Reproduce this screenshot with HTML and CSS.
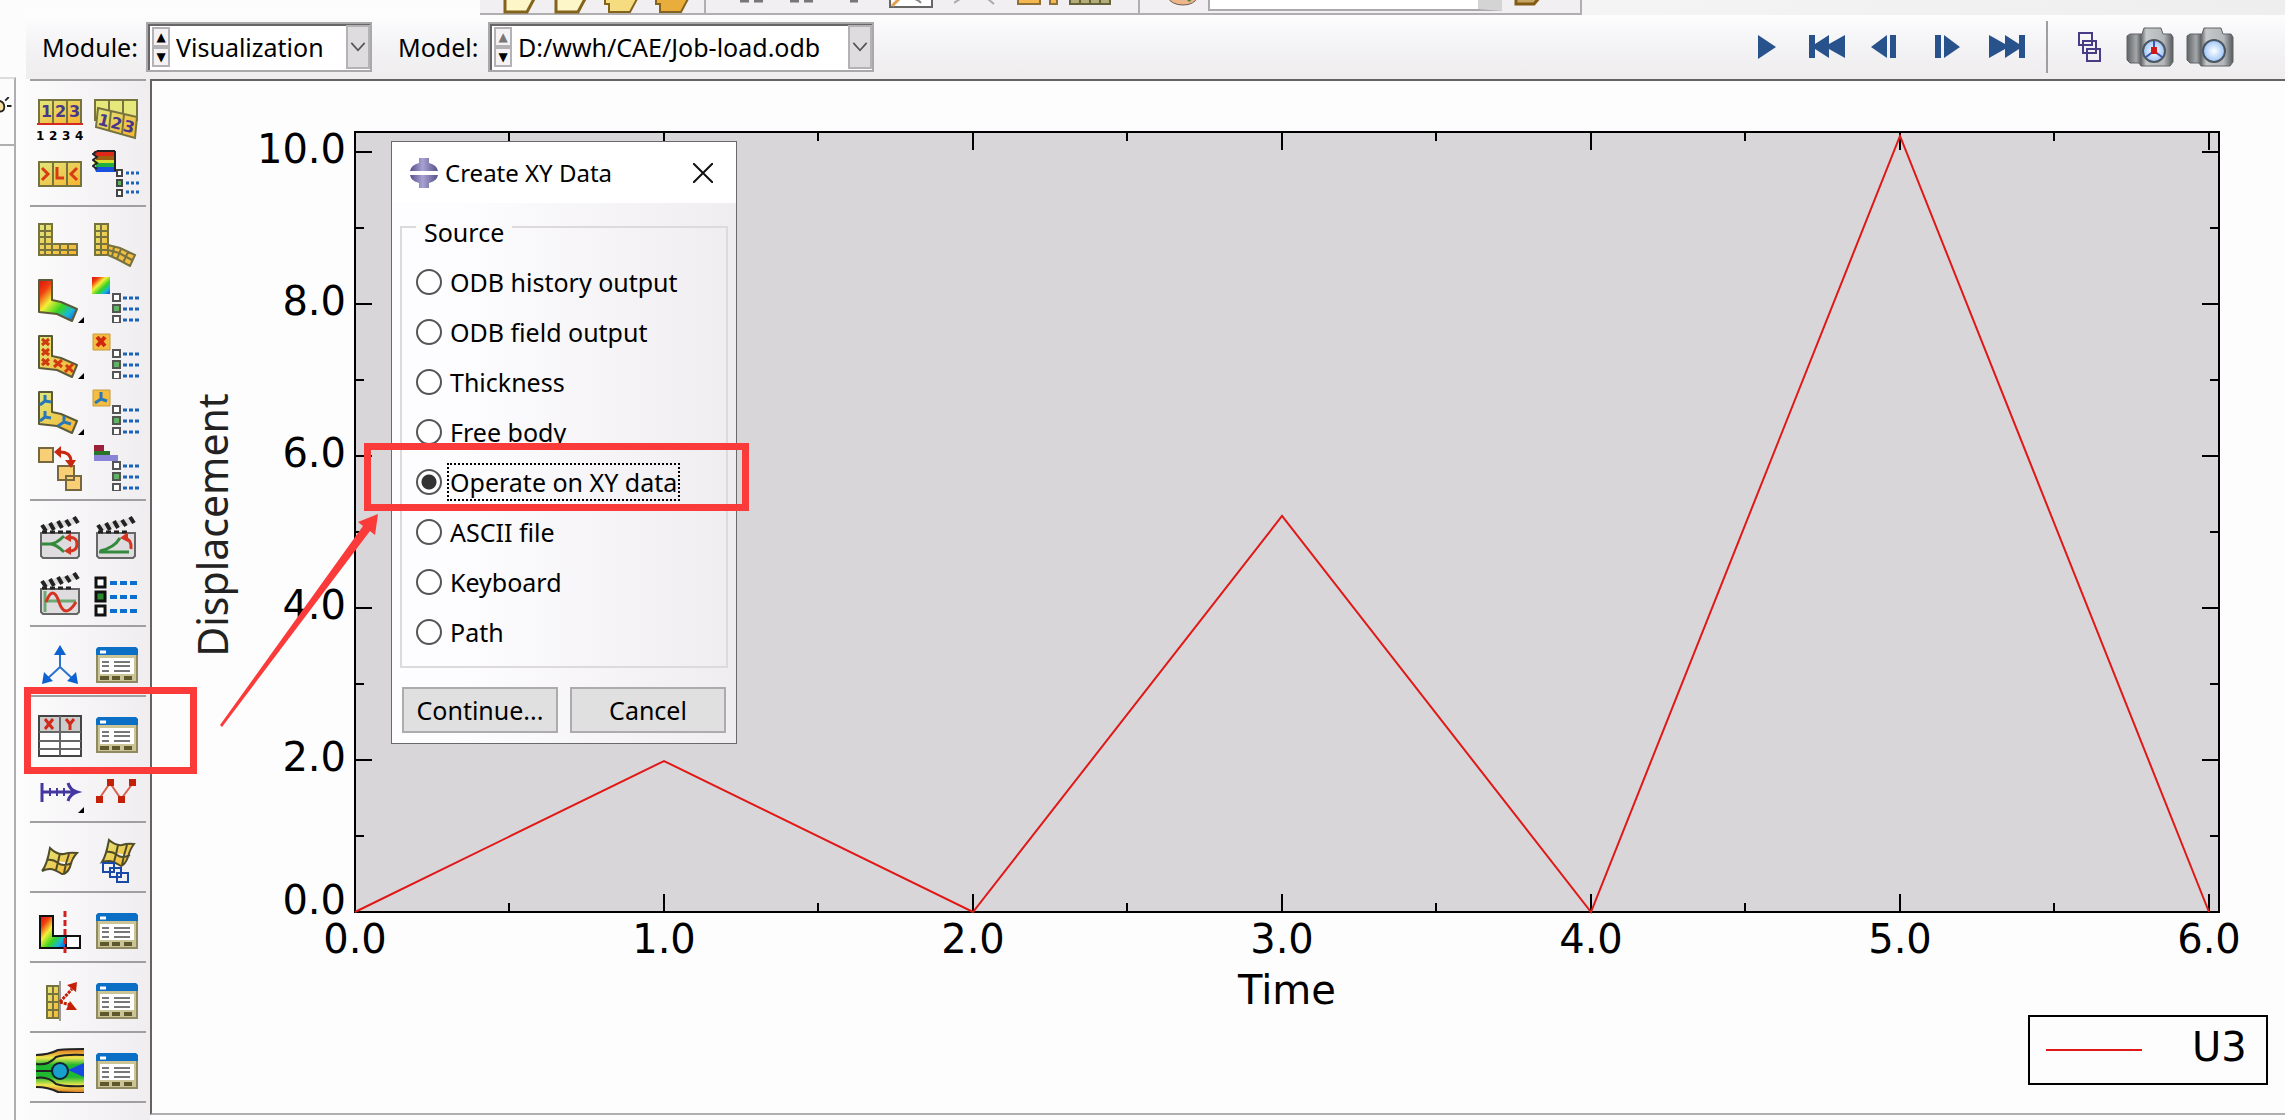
FILE: index.html
```html
<!DOCTYPE html>
<html lang="en">
<head>
    <meta charset="UTF-8">
    <meta name="viewport" content="width=device-width, initial-scale=1.0">
    <title>Visualization - Job-load.odb</title>
    <link rel="stylesheet" href="styles.css">
</head>
<body>

    <!-- shared icon parts -->
    <svg class="defs" width="0" height="0" aria-hidden="true">
        <defs>
            <linearGradient id="gold" x1="0" y1="0" x2="1" y2="1">
                <stop offset="0" stop-color="#dfe87c"/><stop offset="1" stop-color="#f9b32e"/>
            </linearGradient>
            <linearGradient id="rainbow" x1="0" y1="0" x2="1" y2="1">
                <stop offset="0" stop-color="#d81010"/><stop offset=".2" stop-color="#f04010"/><stop offset=".4" stop-color="#f4f03a"/>
                <stop offset=".62" stop-color="#38d420"/><stop offset=".8" stop-color="#18b8d8"/><stop offset="1" stop-color="#1848e8"/>
            </linearGradient>
            <linearGradient id="flow" x1="0" y1="0" x2="0" y2="1">
                <stop offset="0" stop-color="#e07020"/><stop offset=".2" stop-color="#f0e850"/><stop offset=".36" stop-color="#20b830"/>
                <stop offset=".64" stop-color="#20b830"/><stop offset=".82" stop-color="#f0e850"/><stop offset="1" stop-color="#e07020"/>
            </linearGradient>
            <linearGradient id="metal" x1="0" y1="0" x2="1" y2="0">
                <stop offset="0" stop-color="#5f6366"/><stop offset=".2" stop-color="#a4a8aa"/><stop offset=".3" stop-color="#5f6366"/>
                <stop offset=".42" stop-color="#c6c9ca"/><stop offset=".8" stop-color="#b4b7b9"/><stop offset="1" stop-color="#55595c"/>
            </linearGradient>
            <radialGradient id="lens">
                <stop offset="0" stop-color="#ffffff"/><stop offset="1" stop-color="#9cc4f8"/>
            </radialGradient>
            <linearGradient id="violet" x1="0" y1="0" x2="1" y2="0">
                <stop offset="0" stop-color="#56528a"/><stop offset=".45" stop-color="#a7a2d2"/><stop offset="1" stop-color="#56528a"/>
            </linearGradient>
            <symbol id="options" viewBox="0 0 48 48">
                <g stroke="#555" stroke-width="2"><path fill="#fff" d="M21 19h7v7h-7zM21 41h7v7h-7z"/><path fill="#5fb45f" d="M21 30h7v7h-7z"/></g>
                <path stroke="#1c62b8" stroke-width="3" stroke-dasharray="4 2" d="M31 23h16M31 34h16M31 45h16"/>
            </symbol>
            <symbol id="manager" viewBox="0 0 48 48">
                <path fill="#cbc596" stroke="#8f8a62" stroke-width="2" d="M5 12h40v31H5z"/>
                <path fill="#0c6fc6" d="M4 16v-6l2-2h38l2 2v6z"/>
                <path stroke="#fff" stroke-width="3" d="M8 13h6"/>
                <path fill="#fff" d="M8 19h34v16H8z"/>
                <path stroke="#777" stroke-width="2" d="M10 23h7M22 23h16M10 27h7M22 27h16M10 32h7M22 32h16"/>
                <path stroke="#5d582e" stroke-width="4" d="M8 39h9M20 39h8M32 39h8"/>
            </symbol>
            <symbol id="clapper" viewBox="0 0 48 48">
                <path fill="#dedcde" stroke="#666" stroke-width="2" d="M5 20h38v23l-2 2H7l-2-2z"/>
                <path fill="#ddd" d="M4 13 42 4v6L8 18z"/>
                <path stroke="#222" stroke-width="4" d="M6 12l4 6M14 10l4 7M22 8l4 7M30 7l4 6M38 4l4 6"/>
                <path stroke="#222" stroke-width="3" stroke-dasharray="5 3" d="M6 19h30"/>
            </symbol>
            <symbol id="ell" viewBox="0 0 48 48">
                <path stroke="#5d5a3a" stroke-width="2" stroke-linejoin="round" d="M3 5h13v20l9 2 16 7-5 12-15-7-18-2z"/>
            </symbol>
            <symbol id="more" viewBox="0 0 48 48"><path d="M48 42v6h-6z"/></symbol>
            <symbol id="camera" viewBox="0 0 48 40">
                <path fill="url(#metal)" stroke="#606466" d="M1 9l3-2h12l2-6h17l2 6h8l2 3v25l-3 4H15l-2-3H4l-3-3z"/>
                <circle cx="28" cy="24" r="11" fill="url(#lens)" stroke="#4b5660" stroke-width="2"/>
            </symbol>
            <symbol id="folder" viewBox="0 0 36 14"><path fill="#fdf6c8" stroke="#84641c" stroke-width="3" d="M3-3v15h22l8-15"/></symbol>
        </defs>
    </svg>

    <header class="strip">
        <div class="strip-group files">
            <svg width="36" height="14"><use href="#folder"/></svg>
            <svg width="36" height="14"><use href="#folder"/></svg>
            <svg width="36" height="14" viewBox="0 0 36 14"><path fill="#f5dc80" stroke="#84641c" stroke-width="2" d="M1-3v7h4v8h21l8-15"/></svg>
            <svg width="36" height="14" viewBox="0 0 36 14"><path fill="#e9ad3c" stroke="#84641c" stroke-width="2" d="M1-3v7h4v8h21l8-15"/></svg>
        </div>
        <div class="strip-group views">
            <svg width="120" height="14" viewBox="0 0 120 14"><path stroke="#777" stroke-width="3" d="M0 1h9M14 1h9M50 1h9M64 1h9M110 1h8"/></svg>
            <svg width="52" height="14" viewBox="0 0 52 14"><path fill="#fff" stroke="#666" stroke-width="2" d="M9-2v9h42v-9"/><path stroke="#e2a050" stroke-width="3" d="M11 6l8-8"/><path stroke="#888" stroke-width="2" fill="none" d="M26-2q10 0 14 5"/></svg>
            <svg width="42" height="14" viewBox="0 0 42 14"><path stroke="#aaa" stroke-width="2" d="M0 3l6-4M34-1l6 5"/></svg>
            <svg width="96" height="14" viewBox="0 0 96 14"><path fill="#f5b850" stroke="#8f7138" stroke-width="2" d="M1-2h22v6H1zM33-2h7v6h-7z"/><path fill="#b3ad78" stroke="#66633c" stroke-width="2" d="M53-2h40v6H53z"/><path stroke="#66633c" stroke-width="2" d="M63 0v4M73 0v4M83 0v4"/></svg>
        </div>
        <div class="strip-group picker">
            <svg width="32" height="14" viewBox="0 0 32 14"><path fill="#eeb48a" stroke="#6d5c4c" d="M1-3q5 8 16 8t15-8"/><path fill="#478a40" d="M20-1h7l-4 3z"/></svg>
            <select class="strip-select" aria-label="Color codes"><option></option></select>
            <svg width="36" height="14" viewBox="0 0 36 14"><path fill="#c8a465" stroke="#845b14" stroke-width="3" d="M4-3v7h18l6-7"/></svg>
        </div>
    </header>

    <aside class="tree">
        <svg class="bulb" width="12" height="20" viewBox="0 0 12 20"><path fill="#f4e0a0" stroke="#222" stroke-width="2" d="M-4 4q7 1 7 7t-7 5M4 4l4-4M6 10h5"/></svg>
    </aside>

    <div class="context">
        <label for="module">Module:</label>
        <div class="combo module">
            <div class="spin"><button aria-label="Previous module">&#9650;</button><button aria-label="Next module">&#9660;</button></div>
            <select id="module"><option>Visualization</option></select>
            <svg class="arrow" width="24" height="44" viewBox="0 0 24 44"><path d="M4 17l8 9 8-9"/></svg>
        </div>
        <label for="model">Model:</label>
        <div class="combo model">
            <div class="spin"><button aria-label="Previous model" disabled>&#9650;</button><button aria-label="Next model">&#9660;</button></div>
            <select id="model"><option>D:/wwh/CAE/Job-load.odb</option></select>
            <svg class="arrow" width="24" height="44" viewBox="0 0 24 44"><path d="M4 17l8 9 8-9"/></svg>
        </div>
        <div class="player">
            <button aria-label="Play"><svg width="36" height="24" viewBox="0 0 36 24"><path d="M9 0v24l18-12z"/></svg></button>
            <button aria-label="First"><svg width="36" height="24" viewBox="0 0 36 24"><path d="M0 0h6v9L20 0v9L36 0v23L20 14v9L6 14v9H0z"/></svg></button>
            <button aria-label="Previous"><svg width="36" height="24" viewBox="0 0 36 24"><path d="M18 0v23L2 12zM21 0h6v23h-6z"/></svg></button>
            <button aria-label="Next"><svg width="36" height="24" viewBox="0 0 36 24"><path d="M6 0h6v23H6zM15 0v23l16-11z"/></svg></button>
            <button aria-label="Last"><svg width="36" height="24" viewBox="0 0 36 24"><path d="M36 0h-6v9L16 0v9L0 0v23l16-9v9l14-9v9h6z"/></svg></button>
        </div>
        <div class="capture">
            <button aria-label="Viewports"><svg width="24" height="32" viewBox="0 0 24 32"><path fill="none" stroke="#483c86" stroke-width="2" d="M1 2h13v12H1zM5 10h13v12H5zM9 18h13v12H9z"/></svg></button>
            <button aria-label="Capture with triad"><svg width="48" height="40" viewBox="0 0 48 40"><use href="#camera"/><path stroke="#3c55b4" stroke-width="2" d="M28 24V14M28 24l-8 6M28 24l8 6"/><path fill="#d01818" d="M25 20h6v7h-6z"/></svg></button>
            <button aria-label="Capture"><svg width="48" height="40" viewBox="0 0 48 40"><use href="#camera"/></svg></button>
        </div>
    </div>

    <nav class="toolbox">
        <div class="group">
            <button aria-label="Plot undeformed labels"><svg viewBox="0 0 48 48"><path fill="url(#gold)" stroke="#77733f" stroke-width="2" d="M3 7h42v24H3zM17 7v24M31 7v24"/><path stroke="#d42a20" stroke-width="2" d="M1 31h46"/><text class="num" x="5" y="24">1</text><text class="num" x="19" y="24">2</text><text class="num" x="33" y="24">3</text><text class="tiny" x="0" y="47">1</text><text class="tiny" x="13" y="47">2</text><text class="tiny" x="26" y="47">3</text><text class="tiny" x="39" y="47">4</text></svg></button>
            <button aria-label="Plot deformed labels"><svg viewBox="0 0 48 48"><path fill="#e6e87c" stroke="#77733f" stroke-width="2" d="M3 7h42v20H3zM17 7v20M31 7v20"/><path fill="url(#gold)" stroke="#77733f" stroke-width="2" d="M6 15l39 9-2 21-39-11zM19 18l-2 19M32 21l-2 20"/><g transform="rotate(14 24 30)"><text class="num" x="6" y="36">1</text><text class="num" x="19" y="36">2</text><text class="num" x="32" y="36">3</text></g></svg></button>
            <button aria-label="Symbols on strip"><svg viewBox="0 0 48 48"><path fill="url(#gold)" stroke="#77733f" stroke-width="2" d="M3 13h42v24H3zM17 13v24M31 13v24"/><path fill="none" stroke="#d63c14" stroke-width="3" d="M6 19l6 6-6 6M21 18v11h7M41 19l-6 6 6 6"/></svg></button>
            <button aria-label="Common options"><svg viewBox="0 0 48 48"><path fill="#e02818" d="M2 2h20l2 4v3H4z"/><path fill="#a06010" d="M4 7h20v4H4z"/><path fill="#d8e030" d="M2 11h22v4H2z"/><path fill="#20b040" d="M4 14h20v4H4z"/><path fill="#1850e0" d="M2 18h22v5H4z"/><path fill="none" stroke="#222" stroke-width="2" d="M23 2v20M5 2h18M5 2l-4 3 4 3-4 3 4 3-4 3 4 3"/><g stroke="#444" stroke-width="2"><path fill="#fff" d="M25 21h5v6h-5zM25 41h5v6h-5z"/><path fill="#5fb45f" d="M25 31h5v6h-5z"/></g><path stroke="#1c62b8" stroke-width="3" stroke-dasharray="3 2" d="M34 24h13M34 34h13M34 43h13"/></svg></button>
        </div>
        <div class="group">
            <button aria-label="Plot undeformed shape"><svg viewBox="0 0 48 48"><path fill="url(#gold)" stroke="#77733f" stroke-width="2" d="M3 5h13v20h25v11H3zM9 5v31M3 12h13M3 18h13M3 25h13M3 31h38M16 25v11M24 25v11M32 25v11"/></svg></button>
            <button aria-label="Plot deformed shape"><svg viewBox="0 0 48 48"><path fill="url(#gold)" stroke="#77733f" stroke-width="2" d="M3 5h13v31H3zM9 5v31M3 12h13M3 18h13M3 25h13M3 31h13"/><path fill="#f2bd45" stroke="#77733f" stroke-width="2" d="M16 26l12 3 15 7-5 11-13-7-9-4zM16 31l11 3 13 7M22 28l-2 10M29 30l-4 10M36 33l-5 11"/></svg></button>
            <button aria-label="Plot contours"><svg viewBox="0 0 48 48"><use href="#ell" fill="url(#rainbow)"/><use href="#more"/></svg></button>
            <button aria-label="Contour options"><svg viewBox="0 0 48 48"><path fill="url(#rainbow)" d="M0 2h18v17H0z"/><use href="#options"/></svg></button>
            <button aria-label="Plot symbols"><svg viewBox="0 0 48 48"><use href="#ell" fill="url(#gold)"/><path stroke="#d03a10" stroke-width="3" d="M6 8l7 6M13 8l-7 6M6 18l7 6M13 18l-7 6M6 28l7 6M13 28l-7 6M18 29l8 7M26 29l-8 7M30 34l7 7M37 33l-8 8"/><use href="#more"/></svg></button>
            <button aria-label="Symbol options"><svg viewBox="0 0 48 48"><path fill="#f4bd3f" stroke="#c79a3c" d="M1 3h17v16H1z"/><path stroke="#d02810" stroke-width="4" d="M5 6l8 9M13 6l-8 9"/><use href="#options"/></svg></button>
            <button aria-label="Plot material orientations"><svg viewBox="0 0 48 48"><use href="#ell" fill="url(#gold)"/><path fill="none" stroke="#2878b8" stroke-width="3" d="M9 8v6l-5 4M9 14l6 1M9 24v6l-5 4M9 30l6 1M28 29v6l-6 4M28 35l7 2"/><use href="#more"/></svg></button>
            <button aria-label="Orientation options"><svg viewBox="0 0 48 48"><path fill="#f4bd3f" stroke="#c79a3c" d="M1 3h17v16H1z"/><path fill="none" stroke="#2878b8" stroke-width="3" d="M9 5v7l-6 4M9 12l6 2"/><use href="#options"/></svg></button>
            <button aria-label="Allow multiple plot states"><svg viewBox="0 0 48 48"><path fill="#f8cf74" stroke="#77673f" stroke-width="2" d="M3 5h14v14H3zM22 23h16v14H22zM30 33h15v14H30z"/><path fill="none" stroke="#c82810" stroke-width="3" d="M22 9q13-1 13 10"/><path fill="#c82810" d="M18 9l7-6v12zM29 17h11l-5 8z"/></svg></button>
            <button aria-label="Superimpose options"><svg viewBox="0 0 48 48"><path fill="#9c2038" d="M2 2h10v6H2z"/><path fill="#287428" d="M2 8h16v4H2z"/><path fill="#8a84d8" d="M2 12h24v6H2z"/><use href="#options"/></svg></button>
        </div>
        <div class="group">
            <button aria-label="Animate scale factor"><svg viewBox="0 0 48 48"><use href="#clapper"/><path fill="none" stroke="#348a3c" stroke-width="3" d="M6 31h8q6 0 14-8M14 31q6 0 14 8"/><path fill="none" stroke="#d63422" stroke-width="3" d="M31 25q10-2 10 6t-10 7"/><path fill="#d63422" d="M28 25l7-5v9zM28 38l7-5v9z"/></svg></button>
            <button aria-label="Animate time history"><svg viewBox="0 0 48 48"><use href="#clapper"/><path fill="none" stroke="#348a3c" stroke-width="3" d="M7 39h30M8 38q14-3 20-13"/><path fill="none" stroke="#d63422" stroke-width="3" d="M32 25q8 1 7 11"/><path fill="#d63422" d="M28 25l8-6v10z"/></svg></button>
            <button aria-label="Animate harmonic"><svg viewBox="0 0 48 48"><use href="#clapper"/><path stroke="#6ea872" stroke-width="3" d="M9 22v21M9 32h31"/><path fill="none" stroke="#d63422" stroke-width="3" d="M10 33q7-18 13 0t17 0"/></svg></button>
            <button aria-label="Animation options"><svg viewBox="0 0 48 48"><g stroke="#111" stroke-width="3"><path fill="#fff" d="M4 9h9v9H4zM4 37h9v9H4z"/><path fill="#2c8c2c" d="M4 23h9v9H4z"/></g><path stroke="#0c6fd0" stroke-width="4" stroke-dasharray="7 3" d="M18 14h28M18 28h28M18 42h28"/></svg></button>
        </div>
        <div class="group">
            <button aria-label="Create coordinate system"><svg viewBox="0 0 48 48"><path fill="none" stroke="#2a72cc" stroke-width="2" d="M24 14v14L10 41M24 28l14 13"/><path fill="#0c62d0" d="M24 6l6 10H18zM6 45l2-12 9 9zM42 45l-2-12-9 9z"/></svg></button>
            <button aria-label="Coordinate system manager"><svg viewBox="0 0 48 48"><use href="#manager"/></svg></button>
        </div>
        <div class="group">
            <button aria-label="Create XY data"><svg viewBox="0 0 48 48"><path fill="#fff" stroke="#444" stroke-width="2" d="M3 7h42v40H3z"/><path fill="#ccc" d="M4 8h40v14H4z"/><path stroke="#666" stroke-width="2" d="M24 7v40M3 23h42M3 32h42M3 40h42"/><path fill="none" stroke="#d22818" stroke-width="3" d="M9 10l8 10M17 10L9 20M30 10l4 5 4-5M34 15v6"/></svg></button>
            <button aria-label="XY data manager"><svg viewBox="0 0 48 48"><use href="#manager"/></svg></button>
            <button aria-label="Create path"><svg viewBox="0 0 48 48"><path fill="none" stroke="#4438a0" stroke-width="3" d="M6 18v19M6 27h35M32 18q2 7 9 9-7 2-9 9"/><path stroke="#4438a0" stroke-width="2" d="M14 23v8M21 23v8M28 23v8"/><use href="#more"/></svg></button>
            <button aria-label="XY options"><svg viewBox="0 0 48 48"><path fill="none" stroke="#d86050" stroke-width="2" d="M7 34l11-16 11 16 12-16"/><path fill="#c42008" d="M4 31h7v7H4zM15 14h7v7h-7zM26 31h7v7h-7zM37 14h7v7h-7z"/></svg></button>
        </div>
        <div class="group">
            <button aria-label="Create free body"><svg viewBox="0 0 48 48"><path fill="url(#gold)" stroke="#4f4c2a" stroke-width="2" d="M14 13q7 7 14 6 6-2 13-1-5 5-7 14-3 7-8 7-8-5-12-5-4 0-8 2 5-6 8-23zM11 25q6-1 11 3t14 0M24 18q-2 10-4 17M33 19q-3 8-5 19"/></svg></button>
            <button aria-label="Overlay plots"><svg viewBox="0 0 48 48"><path fill="url(#gold)" stroke="#4f4c2a" stroke-width="2" d="M17 5q7 6 13 5 6-2 12-1-4 5-6 13-3 8-7 9-8-5-12-5-4 0-7 1 4-6 7-22zM14 17q6-1 11 3t13 0M26 10q-2 10-4 17M35 10q-3 9-5 20"/><path fill="none" stroke="#1848a8" stroke-width="2" d="M11 28h11v9H11zM18 33h11v9H18zM25 38h11v9H25z"/></svg></button>
        </div>
        <div class="group">
            <button aria-label="View cut"><svg viewBox="0 0 48 48"><path fill="#fff" stroke="#111" stroke-width="2" d="M30 31h14v12H30z"/><path fill="url(#rainbow)" stroke="#111" stroke-width="2" d="M4 11h13v20h13v12H4z"/><path stroke="#d02020" stroke-width="3" stroke-dasharray="6 3" d="M29 6v42"/></svg></button>
            <button aria-label="View cut manager"><svg viewBox="0 0 48 48"><use href="#manager"/></svg></button>
        </div>
        <div class="group">
            <button aria-label="Create free body cut"><svg viewBox="0 0 48 48"><path fill="url(#gold)" stroke="#77733f" stroke-width="2" d="M11 11h12v32H11zM17 11v32M11 19h12M11 27h12M11 35h12"/><path stroke="#999" stroke-width="2" d="M24 6v40"/><path stroke="#c42008" stroke-width="3" stroke-dasharray="3 1" d="M24 27l12-13M24 27l10 3"/><path fill="#c42008" d="M41 7l-1 10-9-7zM41 35l-11 0 4-9z"/></svg></button>
            <button aria-label="Free body manager"><svg viewBox="0 0 48 48"><use href="#manager"/></svg></button>
        </div>
        <div class="group">
            <button aria-label="Create stream"><svg viewBox="0 0 48 48"><path fill="url(#flow)" d="M0 10q12 0 24-5l24-1v44l-24-1q-12-5-24-5z"/><path fill="#1848e0" d="M32 25l16-7v14z"/><path fill="none" stroke="#222" stroke-width="2" d="M0 10q12 0 22-5 10-1 26-1M0 19q12 2 20-7 10-3 28-2M0 26h16M0 33q12-2 20 6 10 3 28 2M0 42q12 0 22 5 10 1 26 1"/><circle cx="24" cy="26" r="8" fill="#18a0cc" stroke="#123" stroke-width="2"/></svg></button>
            <button aria-label="Stream manager"><svg viewBox="0 0 48 48"><use href="#manager"/></svg></button>
        </div>
    </nav>

    <main class="canvas">
        <svg class="plot" viewBox="152 81 2133 1032" role="img" aria-label="Displacement over time">
            <rect class="area" x="355" y="132" width="1864" height="780"/>
            <!-- x ticks, bottom then top -->
            <path class="tick" d="M664 912v-18M973 912v-18M1282 912v-18M1591 912v-18M1900 912v-18M2209 912v-18M509 912v-9M818 912v-9M1127 912v-9M1436 912v-9M1745 912v-9M2054 912v-9"/>
            <path class="tick" d="M664 132v18M973 132v18M1282 132v18M1591 132v18M1900 132v18M2209 132v18M509 132v9M818 132v9M1127 132v9M1436 132v9M1745 132v9M2054 132v9"/>
            <!-- y ticks, left then right -->
            <path class="tick" d="M355 152h17M355 304h17M355 456h17M355 608h17M355 760h17M355 228h9M355 380h9M355 532h9M355 684h9M355 836h9"/>
            <path class="tick" d="M2219 152h-17M2219 304h-17M2219 456h-17M2219 608h-17M2219 760h-17M2219 228h-9M2219 380h-9M2219 532h-9M2219 684h-9M2219 836h-9"/>
            <polyline class="curve" points="355,912 664,761 973,912 1282,516 1591,912 1900,136 2209,912"/>

            <g class="y-labels">
                <text x="346" y="163">10.0</text>
                <text x="346" y="315">8.0</text>
                <text x="346" y="467">6.0</text>
                <text x="346" y="619">4.0</text>
                <text x="346" y="771">2.0</text>
                <text x="346" y="914">0.0</text>
            </g>
            <g class="x-labels">
                <text x="355" y="953">0.0</text>
                <text x="664" y="953">1.0</text>
                <text x="973" y="953">2.0</text>
                <text x="1282" y="953">3.0</text>
                <text x="1591" y="953">4.0</text>
                <text x="1900" y="953">5.0</text>
                <text x="2209" y="953">6.0</text>
                <text x="1287" y="1004">Time</text>
            </g>
            <text class="y-title" transform="translate(228 525) rotate(-90)">Displacement</text>

            <rect class="legend-box" x="2029" y="1016" width="238" height="68"/>
            <path class="curve" d="M2046 1050h96"/>
            <text x="2192" y="1061">U3</text>
        </svg>

        <form class="dialog">
            <div class="titlebar">
                <svg width="30" height="30" viewBox="0 0 30 30"><path fill="url(#violet)" d="M10 0h10v5q8 2 9 8H1q1-6 9-8zM1 17h28q-1 6-9 8v5H10v-5q-8-2-9-8z"/></svg>
                <h1>Create XY Data</h1>
                <button type="button" class="close" aria-label="Close"><svg width="20" height="20" viewBox="0 0 20 20"><path stroke="#111" stroke-width="2" d="M0 0l20 20M20 0L0 20"/></svg></button>
            </div>
            <fieldset>
                <legend>Source</legend>
                <label><input type="radio" name="source"><span>ODB history output</span></label>
                <label><input type="radio" name="source"><span>ODB field output</span></label>
                <label><input type="radio" name="source"><span>Thickness</span></label>
                <label><input type="radio" name="source"><span>Free body</span></label>
                <label><input type="radio" name="source" checked><span>Operate on XY data</span></label>
                <label><input type="radio" name="source"><span>ASCII file</span></label>
                <label><input type="radio" name="source"><span>Keyboard</span></label>
                <label><input type="radio" name="source"><span>Path</span></label>
            </fieldset>
            <div class="actions">
                <button type="button">Continue...</button>
                <button type="button">Cancel</button>
            </div>
        </form>
    </main>

    <!-- red markup over the window -->
    <div class="mark mark-tool"></div>
    <div class="mark mark-option"></div>
    <svg class="mark-arrow" width="160" height="214" viewBox="0 0 160 214"><path d="M0 211L143 12l-5-4 20-8-3 21-5-4L2 213z"/></svg>

</body>
</html>
```
FILE: styles.css
```css
* {
    box-sizing: border-box;
}
body {
    position: relative;
    margin: 0;
    min-height: 100vh;
    display: grid;
    grid-template-columns: 16px 134px 1fr;
    grid-template-rows: 15px 64px 1fr;
    background: #fdfcfd;
    color: #000;
    font-family: "Noto Sans", "Open Sans", sans-serif;
    font-size: 25px;
    line-height: 32px;
}
button, select {
    font: inherit;
    color: inherit;
}
button {
    padding: 0;
    border: none;
    background: none;
}
svg {
    display: block;
}
.defs {
    position: absolute;
}

/* bottom edge of the upper toolbars */
.strip {
    grid-column: 1 / 4;
    display: flex;
    padding-left: 480px;
    overflow: hidden;
    background: linear-gradient(to right, #fdfcfd 30%, #efeeef);
}
.strip-group {
    display: flex;
    height: 15px;
    background: #f1eff1;
    border-right: 2px solid #b0aeb0;
    border-bottom: 2px solid #b0aeb0;
}
.files {
    width: 226px;
    padding-left: 22px;
    gap: 15px;
}
.views {
    width: 434px;
    padding-left: 34px;
    gap: 21px;
}
.picker {
    width: 442px;
    padding-left: 26px;
    gap: 10px;
}
.strip-select {
    appearance: none;
    width: 294px;
    height: 11px;
    background: #fff;
    border: 2px solid #aaa;
    border-top: none;
    border-right: 24px solid #d4d4d4;
}

.tree {
    grid-column: 1;
    grid-row: 2 / 4;
    margin-top: 62px;
    border-top: 2px solid #dddbdd;
    border-right: 2px solid #b0aeb0;
}
.bulb {
    height: 67px;
    padding: 18px 0 29px;
    border-bottom: 2px solid #b0aeb0;
    width: 14px;
}

/* module and model row */
.context {
    grid-column: 2 / 4;
    display: flex;
    align-items: center;
    margin-left: 10px;
    padding: 0 45px 0 16px;
    background: linear-gradient(#fefdfe, #f3f2f4 50%, #efedee);
}
.context label {
    width: 104px;
}
.combo {
    display: flex;
    align-items: center;
    height: 50px;
    padding-left: 4px;
    background: #fff;
    border: 2px solid #aaa8aa;
    box-shadow: inset 2px 2px #666;
}
.combo select {
    flex: 1;
    min-width: 0;
    padding: 0 0 0 6px;
    appearance: none;
    border: none;
    background: none;
}
.module {
    width: 226px;
    margin-right: 26px;
}
.model {
    width: 386px;
}
.combo.model {
    margin-left: -14px;
}
.spin {
    display: flex;
    flex-direction: column;
    width: 18px;
}
.spin button {
    height: 20px;
    border: 2px solid #b4b2b4;
    background: #f4f2f4;
    font-family: "DejaVu Sans", sans-serif;
    font-size: 12px;
    line-height: 16px;
}
.spin button:disabled {
    color: #777;
}
.arrow {
    background: #dedcde;
    border: 2px solid #b4b2b4;
}
.arrow path {
    fill: none;
    stroke: #555;
    stroke-width: 2px;
}
.player {
    display: flex;
    margin-left: auto;
}
.player button, .capture button {
    display: grid;
    place-items: center;
    width: 60px;
    height: 52px;
}
.player svg {
    fill: #28528c;
}
.capture {
    display: flex;
    margin-left: 9px;
    padding-left: 12px;
    border-left: 2px solid #a09ea0;
}

.toolbox {
    grid-column: 2;
    grid-row: 3;
    padding-right: 4px;
    padding-left: 14px;
    background: linear-gradient(to right, #fefdfe, #efedef);
}
.group {
    display: grid;
    grid-template-columns: 56px 56px;
    padding: 8px 0 4px 2px;
    border-bottom: 2px solid #a09ea0;
}
.group:first-child {
    border-top: 2px solid #a09ea0;
}
.group button {
    display: grid;
    place-items: center;
    height: 56px;
}
.group svg {
    width: 48px;
    height: 48px;
}
.num {
    font: bold 16px "DejaVu Sans", sans-serif;
    fill: #48388c;
}
.tiny {
    font: bold 12px "DejaVu Sans", sans-serif;
}

.canvas {
    grid-column: 3;
    grid-row: 3;
    align-self: start;
    position: relative;
    border: 2px solid #666264;
    border-right: none;
    border-bottom-color: #b0aeb0;
    background: #fefdfe;
}
.plot {
    width: 100%;
    height: auto;
    font-family: "DejaVu Sans", sans-serif;
    font-size: 40px;
}
.area {
    fill: #d8d6d9;
    stroke: #000;
    stroke-width: 2px;
}
.tick {
    stroke: #000;
    stroke-width: 2px;
}
.curve {
    fill: none;
    stroke: #e01818;
    stroke-width: 2px;
}
.legend-box {
    fill: none;
    stroke: #000;
    stroke-width: 2px;
}
.y-labels {
    text-anchor: end;
}
.x-labels, .y-title {
    text-anchor: middle;
}
.y-title {
    font-family: "Noto Sans", sans-serif;
    font-size: 41px;
    fill: #222;
}

/* floating window */
.dialog {
    position: absolute;
    top: 60px;
    left: 239px;
    width: 346px;
    padding-bottom: 10px;
    border: 1px solid #6a6a6a;
    background: linear-gradient(to right, #fdfcfe 20%, #efedef);
}
.titlebar {
    display: flex;
    align-items: center;
    height: 61px;
    padding: 0 23px 0 17px;
    background: #fff;
}
.titlebar h1 {
    flex: 1;
    margin: 0 0 0 6px;
    font-size: 24px;
    font-weight: normal;
}
.dialog fieldset {
    margin: 3px 8px 19px;
    padding: 9px 0 9px 14px;
    border: 2px solid #dcdadc;
}
.dialog legend {
    padding: 10px 8px 0;
}
.dialog label {
    display: flex;
    align-items: center;
    height: 50px;
}
.dialog label span {
    margin-left: 5px;
    padding: 1px;
    border: 2px solid transparent;
}
.dialog input {
    appearance: none;
    flex: none;
    width: 26px;
    height: 26px;
    margin: 0;
    border: 2px solid #555;
    border-radius: 50%;
    background: #fff;
}
.dialog input:checked {
    background: radial-gradient(#333 7px, #fff 8px);
}
.dialog input:checked + span {
    border: 2px dotted #000;
}
.actions {
    display: flex;
    gap: 12px;
    padding: 0 10px;
}
.actions button {
    flex: 1;
    height: 46px;
    border: 2px solid #adabad;
    background: #e1e0e1;
}

.mark {
    position: absolute;
    border: 7px solid #fb3a3a;
}
.mark-tool {
    top: 687px;
    left: 24px;
    width: 173px;
    height: 87px;
}
.mark-option {
    top: 443px;
    left: 364px;
    width: 385px;
    height: 68px;
}
.mark-arrow {
    position: absolute;
    top: 514px;
    left: 220px;
    fill: #fb3a3a;
}
```
